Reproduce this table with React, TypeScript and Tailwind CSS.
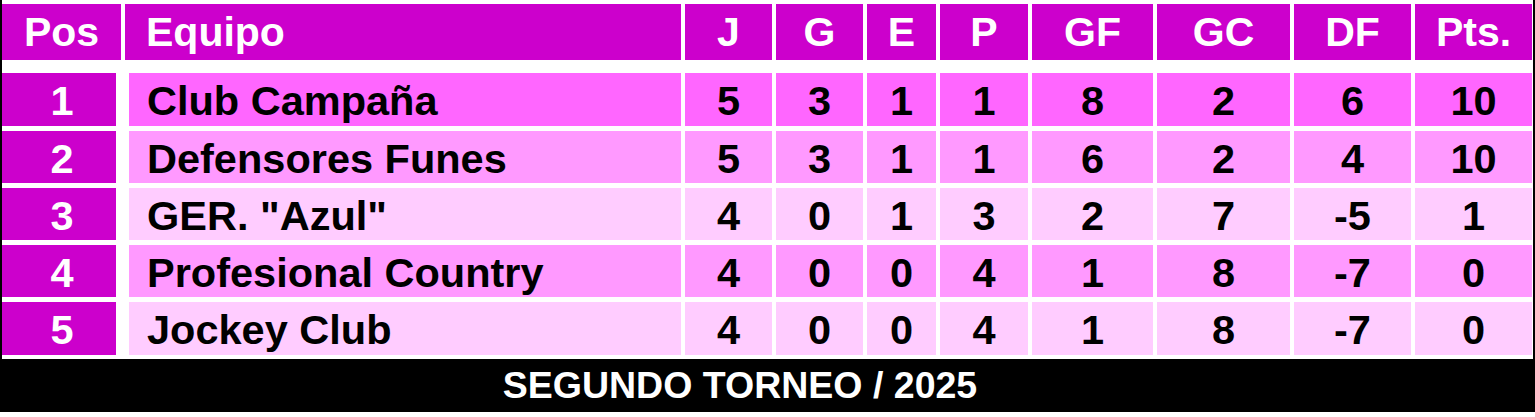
const COLS = "grid grid-cols-[119px_556px_87px_87px_69px_88px_121px_133px_117px_117px] gap-x-[4px]"

const HEADERS = ["J", "G", "E", "P", "GF", "GC", "DF", "Pts."]

const ROWS = [
  { pos: 1, team: "Club Campaña", stats: [5, 3, 1, 1, 8, 2, 6, 10], bg: "bg-[#ff66ff]", h: "h-[53px]" },
  { pos: 2, team: "Defensores Funes", stats: [5, 3, 1, 1, 6, 2, 4, 10], bg: "bg-[#ff99ff]", h: "h-[52px]" },
  { pos: 3, team: 'GER. "Azul"', stats: [4, 0, 1, 3, 2, 7, -5, 1], bg: "bg-[#ffccff]", h: "h-[52px]" },
  { pos: 4, team: "Profesional Country", stats: [4, 0, 0, 4, 1, 8, -7, 0], bg: "bg-[#ff99ff]", h: "h-[52px]" },
  { pos: 5, team: "Jockey Club", stats: [4, 0, 0, 4, 1, 8, -7, 0], bg: "bg-[#ffccff]", h: "h-[53px]" },
]

export default function App() {
  return (
    <div className="w-[1535px] h-[417px] bg-white font-['Liberation_Sans',Arial,sans-serif] font-bold leading-none">
      <div className="h-[412px] border-x-2 border-black flex flex-col">
        {/* header */}
        <div className={`${COLS} mt-[4px] h-[56px] text-white text-[41px]`}>
          <div className="bg-[#cc00cc] flex items-center justify-center">Pos</div>
          <div className="bg-[#cc00cc] flex items-center pl-[21px]">Equipo</div>
          {HEADERS.map((h) => (
            <div key={h} className="bg-[#cc00cc] flex items-center justify-center">
              {h}
            </div>
          ))}
        </div>

        <div className="mt-[13px] flex flex-col gap-y-[5px] text-[41.5px]">
          {ROWS.map((row) => (
            <div key={row.pos} className={`${COLS} ${row.h}`}>
              <div className="w-[114px] bg-[#cc00cc] text-white flex items-center justify-center pl-[6px] pt-[3px]">
                {row.pos}
              </div>
              <div className={`${row.bg} ml-[4px] flex items-center pl-[18px] pt-[3px] text-black`}>
                {row.team}
              </div>
              {row.stats.map((s, i) => (
                <div key={i} className={`${row.bg} flex items-center justify-center pt-[3px] text-black`}>
                  {s}
                </div>
              ))}
            </div>
          ))}
        </div>

        {/* footer */}
        <div className="mt-auto -mx-[2px] h-[53px] bg-black text-white text-[37.5px] flex items-center justify-center pr-[55px]">
          SEGUNDO TORNEO / 2025
        </div>
      </div>
    </div>
  )
}
